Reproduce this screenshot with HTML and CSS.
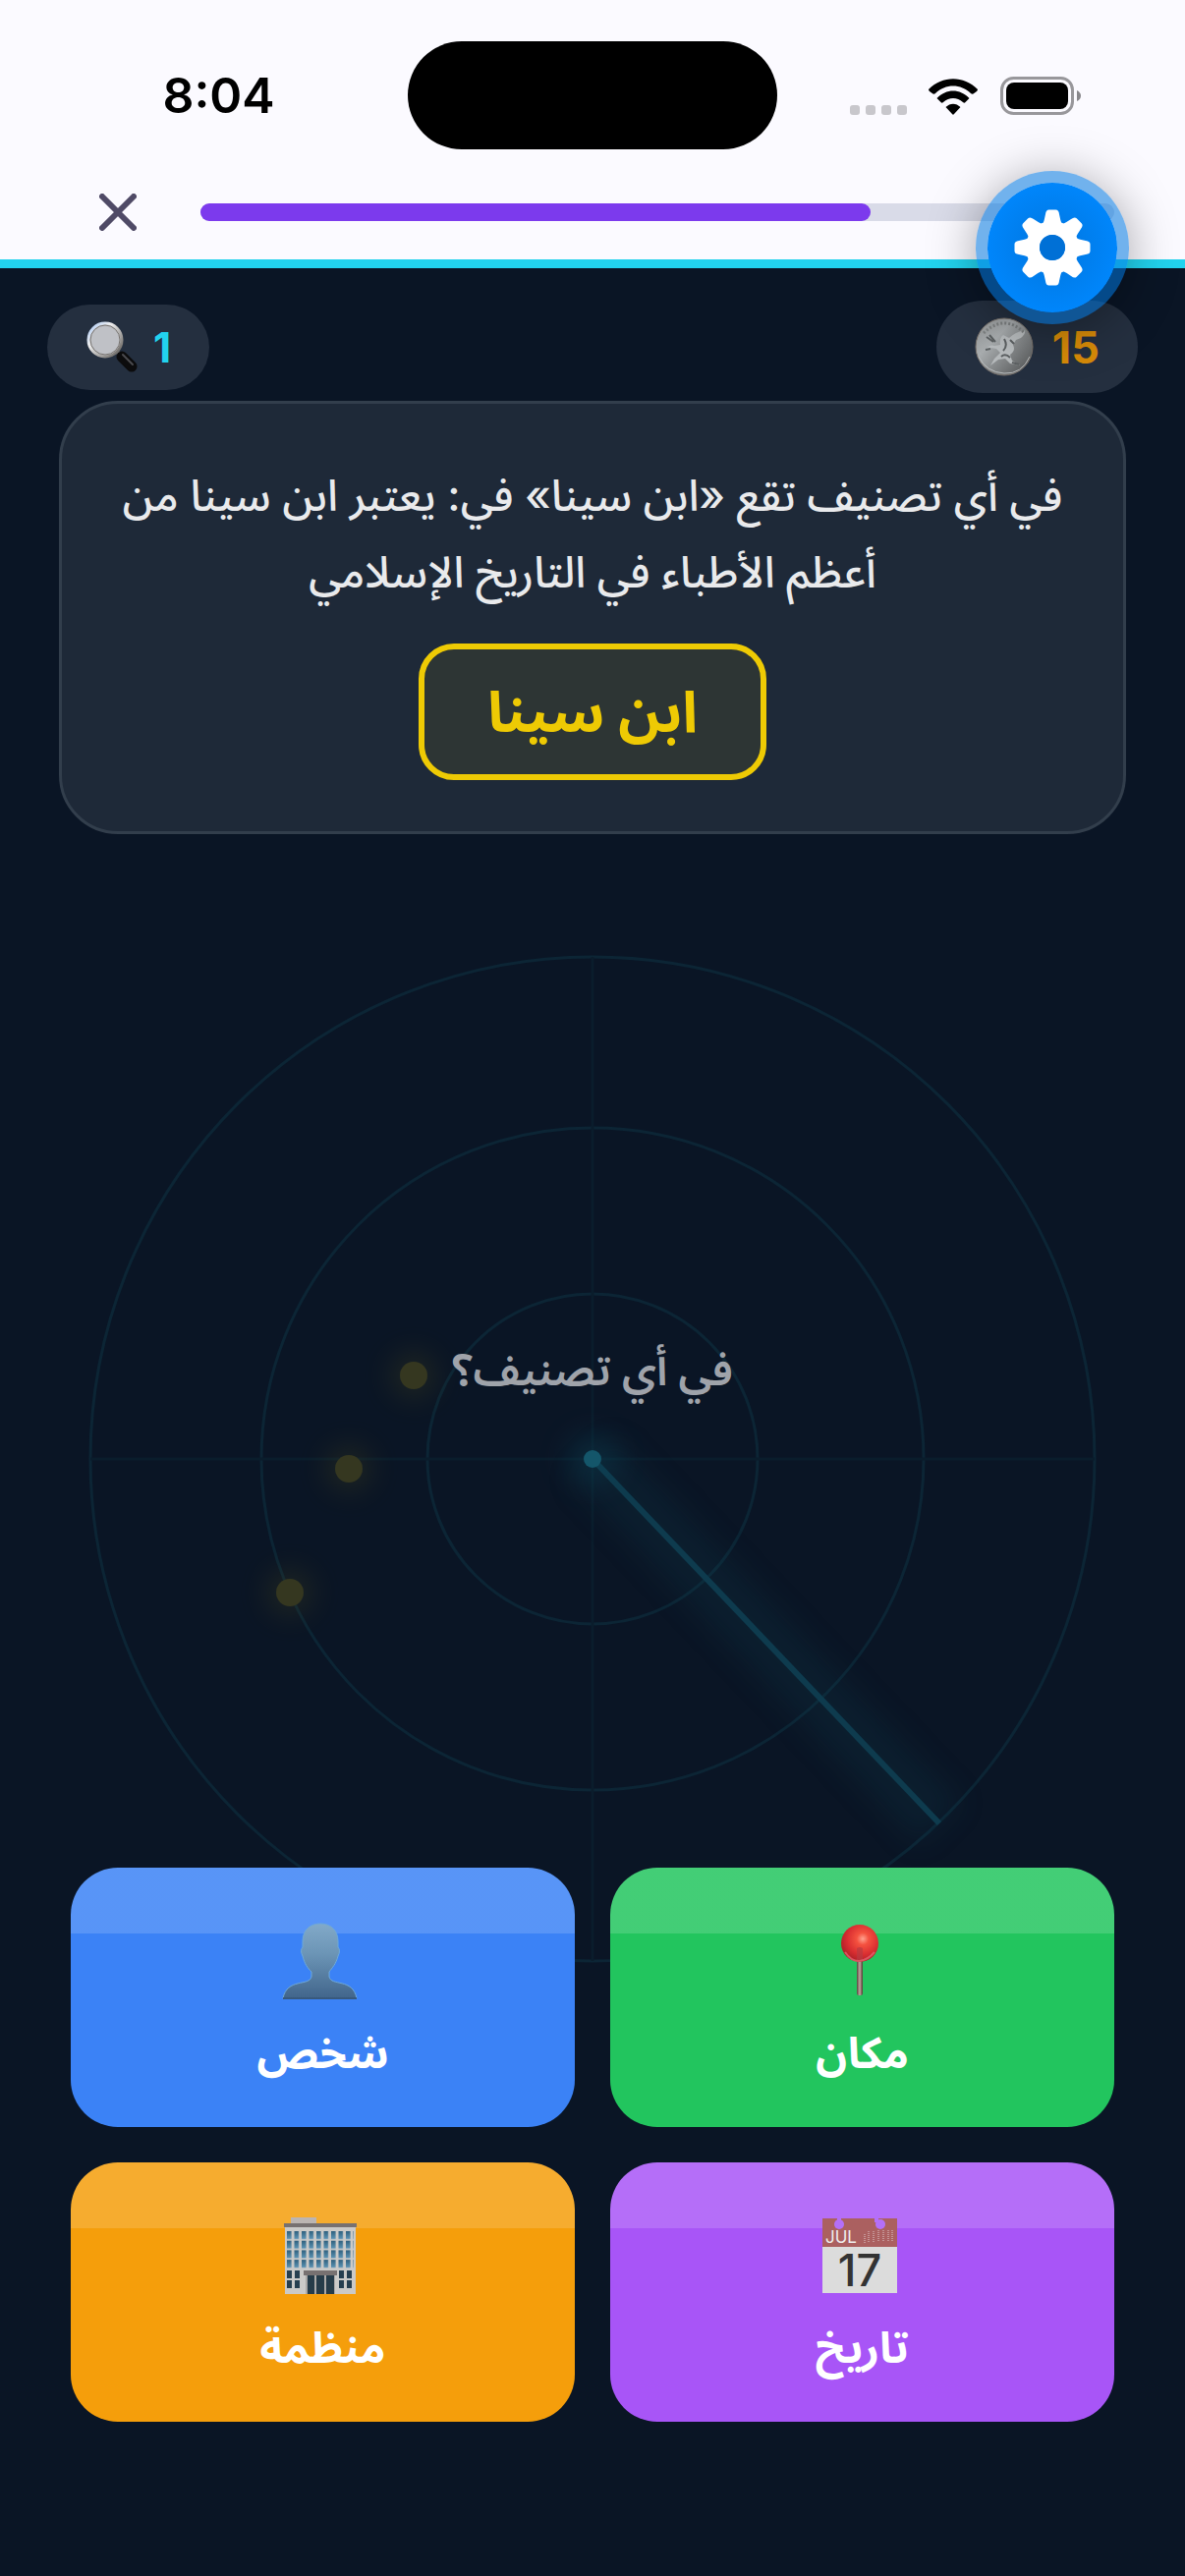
FILE: index.html
```html
<!DOCTYPE html>
<html lang="ar">
<head>
  <meta charset="UTF-8" />
  <meta name="viewport" content="width=device-width, initial-scale=1.0" />
  <title>في أي تصنيف؟</title>
  <link rel="stylesheet" href="styles.css">
</head>
<body>

  <header class="header">
    <div class="status-bar">
      <div class="time">8:04</div>
      <div class="island"></div>
      <div class="status-icons">
        <svg class="signal" viewBox="0 0 58 10" fill="#c8c7cc">
          <rect width="10" height="10" rx="3" />
          <rect x="16" width="10" height="10" rx="3" />
          <rect x="32" width="10" height="10" rx="3" />
          <rect x="48" width="10" height="10" rx="3" />
        </svg>
        <svg class="wifi" viewBox="0 0 50 37">
          <path d="M0 11C14-3.500 36-3.500 50 11Q50 12 49 13L45.500 15.500Q44 16 43 15C33 5 17 5 7 15Q6 16 4.500 15.500L1 13Q0 12 0 11Z" />
          <path d="M8.500 20C18 10 32 10 41.500 20L37 24.500Q36 25 35 24C29 18.500 21 18.500 15 24Q14 25 13 24.500Z" />
          <path d="M17.500 29C22 24.500 28 24.500 32.500 29L26 36Q25 37.500 24 36Z" />
        </svg>
        <svg class="battery" viewBox="0 0 82 39">
          <rect x="1.500" y="1.500" width="72" height="36" rx="12" fill="none" stroke="#98979b" stroke-width="3" />
          <rect x="6" y="6" width="63" height="27" rx="8" />
          <path d="M78 14Q82 16 82 19.500T78 25Z" fill="#88878b" />
        </svg>
      </div>
    </div>
    <div class="toolbar">
      <button class="close" type="button" aria-label="إغلاق">
        <svg viewBox="0 0 38 38"><path d="M3 3L35 35M35 3L3 35" /></svg>
      </button>
      <div class="progress"><div class="progress-fill" style="width: 73.3%"></div></div>
    </div>
  </header>

  <button class="settings" type="button" aria-label="الإعدادات">
    <svg viewBox="-39 -39 78 78" fill="#fff">
      <defs>
        <path id="tooth" d="M-10-23Q-8-28-7-34Q-6.500-38.500-3.500-38.500H3.500Q6.500-38.500 7-34Q8-28 10-23Z" />
      </defs>
      <circle r="20" fill="none" stroke="#fff" stroke-width="14" />
      <use href="#tooth" />
      <use href="#tooth" transform="rotate(45)" />
      <use href="#tooth" transform="rotate(90)" />
      <use href="#tooth" transform="rotate(135)" />
      <use href="#tooth" transform="rotate(180)" />
      <use href="#tooth" transform="rotate(225)" />
      <use href="#tooth" transform="rotate(270)" />
      <use href="#tooth" transform="rotate(315)" />
      <circle r="13" fill="#0070d6" />
    </svg>
  </button>

  <main class="game">
    <div class="stats">
      <div class="pill clues">
        <svg viewBox="0 0 54 54">
          <defs>
            <linearGradient id="rim" x1="0" y1="0" x2="1" y2="1">
              <stop offset="0" stop-color="#a9c8f5" />
              <stop offset=".35" stop-color="#eeeeee" />
              <stop offset="1" stop-color="#57534e" />
            </linearGradient>
          </defs>
          <path d="M33 33L39 39" stroke="#aaa7a2" stroke-width="4" />
          <path d="M37 37L47 47" stroke="#0c0c0d" stroke-width="11" stroke-linecap="round" />
          <path d="M38 35L48 45" stroke="#4b4b4e" stroke-width="2" stroke-linecap="round" />
          <circle cx="20" cy="20" r="17" fill="#bfc1c6" stroke="url(#rim)" stroke-width="3" />
          <circle cx="20" cy="20" r="15" fill="none" stroke="#77736f" stroke-width="1" />
        </svg>
        <span>1</span>
      </div>
      <div class="pill coins">
        <svg viewBox="0 0 60 60">
          <defs>
            <linearGradient id="coin" x1="0" y1="0" x2="1" y2="1">
              <stop offset="0" stop-color="#8f9192" />
              <stop offset=".35" stop-color="#a9adaf" />
              <stop offset="1" stop-color="#4a4c4d" />
            </linearGradient>
          </defs>
          <circle cx="30" cy="30" r="29" fill="url(#coin)" stroke="#77706a" stroke-width="1" />
          <path d="M4 40Q12 56 30 57T56 40" fill="none" stroke="#b9bcbd" stroke-width="1" />
          <path d="M11 33Q15 27 20 29L26 28Q25 21 29 18L35 21Q41 15 51 13Q52 17 47 21L42 23L39 28Q42 34 36 38L38 44L46 49L36 47L31 42L24 43L16 49L20 42L26 36L22 32L17 31Z" fill="#b8bcbe" />
          <path d="M30 22Q34 29 29 34M36 23L40 27M27 40Q31 36 36 41M12 20L19 25M15 18L21 25M11 33L16 32M38 46L45 48" fill="none" stroke="#5c6062" stroke-width="2" />
          <path d="M9 16Q30 -4 51 16" fill="none" stroke="#7d8081" stroke-width="3" stroke-dasharray="2 2" />
        </svg>
        <span>15</span>
      </div>
    </div>

    <section class="question" dir="rtl">
      <p>في أي تصنيف تقع «ابن سينا» في: يعتبر ابن سينا من أعظم الأطباء في التاريخ الإسلامي</p>
      <div class="word">ابن سينا</div>
    </section>

    <div class="stage">
      <svg class="radar" viewBox="0 0 1026 1026">
        <defs>
          <filter id="blur" x="-100%" y="-100%" width="300%" height="300%" color-interpolation-filters="sRGB">
            <feGaussianBlur stdDeviation="14" />
          </filter>
        </defs>
        <g fill="none" stroke="#0c2535" stroke-width="3">
          <circle cx="513" cy="513" r="511" />
          <circle cx="513" cy="513" r="337" />
          <circle cx="513" cy="513" r="168" />
        </g>
        <path d="M513 2V1024M2 513H1024" stroke="#0a1d2c" stroke-width="3" />
        <!-- sweep -->
        <path d="M513 513L866 884" stroke="#0e4658" stroke-opacity=".18" stroke-width="60" filter="url(#blur)" />
        <path d="M513 513L866 884" stroke="#0e3b4e" stroke-width="6" />
        <circle cx="513" cy="513" r="26" fill="#0e4658" opacity=".35" filter="url(#blur)" />
        <circle cx="513" cy="513" r="9" fill="#14566a" />
        <!-- blips -->
        <g fill="#56501a" opacity=".25" filter="url(#blur)">
          <circle cx="331" cy="428" r="24" />
          <circle cx="265" cy="523" r="24" />
          <circle cx="205" cy="649" r="24" />
        </g>
        <g fill="#353720">
          <circle cx="331" cy="428" r="14" />
          <circle cx="265" cy="523" r="14" />
          <circle cx="205" cy="649" r="14" />
        </g>
      </svg>
      <div class="radar-label" dir="rtl">في أي تصنيف؟</div>
    </div>

    <div class="answers">
      <button class="answer person" type="button">
        <svg viewBox="0 0 78 78">
          <defs>
            <linearGradient id="bust" x1="0" y1="0" x2="0" y2="1">
              <stop offset="0" stop-color="#82a9c8" />
              <stop offset=".4" stop-color="#6c95b6" />
              <stop offset="1" stop-color="#41658b" />
            </linearGradient>
          </defs>
          <path d="M39 1C49 1 57 7 57 19L57 25Q60 28 57 34C55 42 51 46 48 50V55C50 65 72 56 76 77H1C5 56 28 65 30 55V50C26 46 23 42 21 34Q18 28 21 25L21 19C21 7 29 1 39 1Z" fill="url(#bust)" stroke="#6fa9d8" stroke-width="1" />
          <path d="M1 77H76" stroke="#38597c" stroke-width="2" />
        </svg>
        <span>شخص</span>
      </button>
      <button class="answer place" type="button">
        <svg viewBox="0 0 78 78">
          <defs>
            <radialGradient id="ball" cx=".58" cy=".38" r=".65">
              <stop offset="0" stop-color="#ffa28f" />
              <stop offset=".25" stop-color="#f4513f" />
              <stop offset=".65" stop-color="#d92e31" />
              <stop offset="1" stop-color="#a81f26" />
            </radialGradient>
            <linearGradient id="needle">
              <stop offset="0" stop-color="#57413c" />
              <stop offset=".5" stop-color="#c0aaa0" />
              <stop offset="1" stop-color="#53332f" />
            </linearGradient>
          </defs>
          <rect x="36" y="38" width="6" height="36" rx="2" fill="url(#needle)" />
          <ellipse cx="39" cy="21" rx="19" ry="19" fill="url(#ball)" />
          <path d="M36 26Q39 24 42 26V38H36Z" fill="#b83a42" opacity=".7" />
          <path d="M24 30Q31 40 39 39T54 30" fill="none" stroke="#e2626f" stroke-width="2" opacity=".8" />
        </svg>
        <span>مكان</span>
      </button>
      <button class="answer organization" type="button">
        <svg viewBox="0 0 78 78">
          <defs>
            <linearGradient id="glass" x1="0" y1="0" x2="0" y2="1">
              <stop offset="0" stop-color="#2f607e" />
              <stop offset="1" stop-color="#5c94b5" />
            </linearGradient>
            <pattern id="windows" x="5" y="14" width="7.500" height="9.700" patternUnits="userSpaceOnUse">
              <rect width="4.500" height="8" fill="url(#glass)" />
            </pattern>
          </defs>
          <rect x="9" y="0" width="26" height="6" fill="#bcb5b2" />
          <rect x="3" y="9" width="72" height="69" fill="#cbcac8" />
          <rect x="2" y="6" width="74" height="4" fill="#777171" />
          <rect x="5" y="14" width="68" height="38" fill="url(#windows)" />
          <g fill="#263f50">
            <rect x="5" y="54" width="5" height="8" /><rect x="13" y="54" width="5" height="8" />
            <rect x="58" y="54" width="5" height="8" /><rect x="66" y="54" width="5" height="8" />
            <rect x="5" y="64" width="5" height="8" /><rect x="13" y="64" width="5" height="8" />
            <rect x="58" y="64" width="5" height="8" /><rect x="66" y="64" width="5" height="8" />
          </g>
          <rect x="24" y="58" width="30" height="20" fill="#aaa8a7" />
          <rect x="22" y="54" width="34" height="5" fill="#777171" />
          <path d="M26 59H33V78H26ZM35 59H43V78H35ZM45 59H53V78H45Z" fill="#263c49" />
        </svg>
        <span>منظمة</span>
      </button>
      <button class="answer date" type="button">
        <svg viewBox="0 0 78 78">
          <rect x="1" y="1" width="76" height="76" fill="#dcdcdc" />
          <rect x="1" y="1" width="76" height="29" fill="#ab6060" />
          <g fill="#b46ff9">
            <circle cx="18" cy="7" r="5" /><rect x="16" y="0" width="4" height="6" />
            <circle cx="60" cy="7" r="5" /><rect x="54" y="0" width="4" height="5" />
          </g>
          <path d="M44 17V26M48 14V26M53 14V26M58 13V25M63 13V24M68 13V24M72 13V24" stroke="#c49495" stroke-width="2" stroke-dasharray="1 1" />
          <text class="cal-month" x="4" y="26">JUL</text>
          <text class="cal-day" x="39" y="70">17</text>
        </svg>
        <span>تاريخ</span>
      </button>
    </div>
  </main>

</body>
</html>
```
FILE: styles.css
```css
* {
  box-sizing: border-box;
}

body {
  margin: 0;
  min-height: 100vh;
  position: relative;
  display: flex;
  flex-direction: column;
  background-color: #0a1525;
  color: white;
  font-family: Inter, "Noto Sans Arabic", "Noto Sans", "DejaVu Sans", sans-serif;
}

button {
  margin: 0;
  padding: 0;
  border: none;
  background: none;
  color: inherit;
  font-family: inherit;
  cursor: pointer;
}

svg {
  display: block;
}

.header {
  background-color: #fbfaff;
  border-bottom: 9px solid #22d3ee;
}

.status-bar {
  display: grid;
  grid-template-columns: 1fr 376px 1fr;
  align-items: center;
  padding-top: 42px;
}

.time {
  padding-left: 30px;
  color: black;
  font-size: 50px;
  font-weight: 600;
  line-height: 60px;
  text-align: center;
}

.island {
  height: 110px;
  border-radius: 55px;
  background-color: black;
}

.status-icons {
  display: flex;
  align-items: flex-end;
  justify-content: flex-end;
  padding-right: 106px;
}

.signal {
  width: 58px;
  height: 10px;
  margin-right: 22px;
}

.wifi {
  width: 50px;
  height: 37px;
  margin-right: 23px;
}

.battery {
  width: 82px;
  height: 39px;
}

.toolbar {
  display: flex;
  align-items: center;
  gap: 52px;
  height: 112px;
  padding: 24px 72px 8px 88px;
}

.close {
  padding: 13px;
}

.close svg {
  width: 38px;
  height: 38px;
}

.close path {
  stroke: #4f4a66;
  stroke-width: 6;
  stroke-linecap: round;
}

.progress {
  flex: 1;
  height: 18px;
  border-radius: 9px;
  background-color: #d9dbe8;
}

.progress-fill {
  height: 100%;
  border-radius: 9px;
  background-color: #7c3aed;
}

.settings {
  position: absolute;
  top: 174px;
  right: 57px;
  z-index: 1;
  width: 156px;
  height: 156px;
  padding: 27px;
  border: 12px solid rgba(0, 118, 222, 0.55);
  border-radius: 50%;
  background: radial-gradient(circle, #007ae6 20%, #08f 80%) padding-box;
  box-shadow: 0 6px 50px rgba(0, 0, 0, 0.35);
}

.settings svg {
  width: 78px;
  height: 78px;
}

.game {
  flex: 1;
  padding: 33px 0 157px;
}

.stats {
  display: flex;
  align-items: center;
  justify-content: space-between;
  padding: 0 48px;
}

.pill {
  display: flex;
  align-items: center;
  border-radius: 47px;
  background-color: #242f3f;
  font-weight: 700;
}

.clues {
  gap: 15px;
  height: 87px;
  padding: 0 39px;
  color: #22d3ee;
  font-size: 42px;
}

.clues svg {
  width: 54px;
  height: 54px;
}

.coins {
  gap: 19px;
  height: 94px;
  padding: 0 39px;
  color: #d68a08;
  font-size: 45px;
}

.coins svg {
  width: 60px;
  height: 60px;
}

.question {
  margin: 8px 60px 0;
  padding: 54px 54px 52px;
  border: 3px solid #323e4c;
  border-radius: 60px;
  background-color: #1e2938;
  text-align: center;
}

.question p {
  margin: 0 0 34px;
  color: #e9eaec;
  font-size: 44px;
  font-weight: 500;
  line-height: 78px;
}

.word {
  display: inline-block;
  padding: 0 64px;
  border: 6px solid #eeca04;
  border-radius: 36px;
  background-color: #2d3534;
  color: #eeca04;
  font-size: 58px;
  font-weight: 700;
  line-height: 127px;
  vertical-align: top;
}

.stage {
  position: relative;
  margin: 123px 90px 0;
}

.radar {
  width: 100%;
}

.radar-label {
  position: absolute;
  top: 37%;
  width: 100%;
  color: #9fa3aa;
  font-size: 44px;
  font-weight: 600;
  line-height: 84px;
  text-align: center;
}

.answers {
  position: relative;
  display: grid;
  grid-template-columns: 1fr 1fr;
  gap: 36px;
  margin-top: -97px;
  padding: 0 72px;
}

.answer {
  display: flex;
  flex-direction: column;
  align-items: center;
  gap: 18px;
  height: 264px;
  padding-top: 56px;
  border-radius: 48px;
  background-image: linear-gradient(rgba(255, 255, 255, 0.15) 67px, transparent 67px);
  color: white;
  font-size: 44px;
  font-weight: 700;
  line-height: 72px;
}

.answer svg {
  width: 78px;
  height: 78px;
  margin-right: 5px;
  overflow: visible;
}

.person {
  background-color: #3b82f6;
}

.place {
  background-color: #22c55e;
}

.organization {
  background-color: #f59e0b;
}

.date {
  background-color: #a855f7;
}

.cal-month {
  fill: #eee;
  font-size: 17px;
  font-weight: 400;
}

.cal-day {
  fill: #333;
  font-size: 45px;
  font-weight: 500;
  text-anchor: middle;
}
```
